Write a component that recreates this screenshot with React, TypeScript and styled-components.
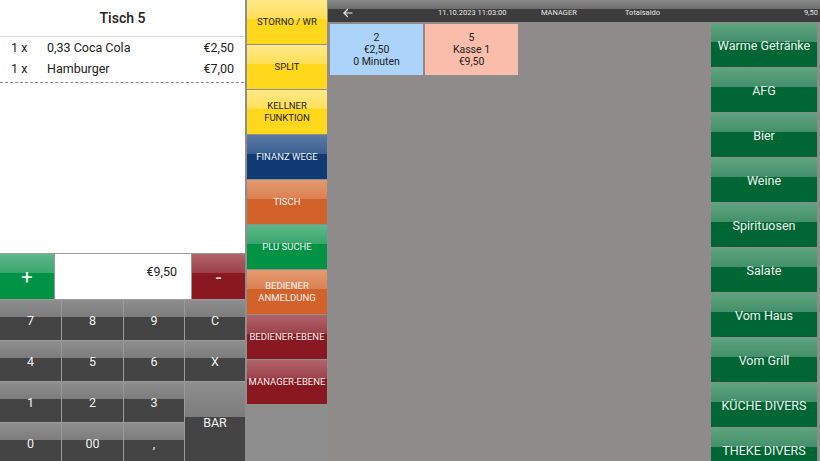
import React from 'react';
import styled, { createGlobalStyle } from 'styled-components';

const GlobalStyle = createGlobalStyle`
  html, body {
    margin: 0;
    padding: 0;
    width: 820px;
    height: 461px;
    overflow: hidden;
    font-family: Roboto, "Liberation Sans", sans-serif;
  }
`;

const Screen = styled.div`
  display: grid;
  grid-template-columns: 245px 83px 1fr;
  width: 820px;
  height: 461px;
  background: #8f8b8a;
  overflow: hidden;
`;

const LeftPanel = styled.div`
  display: flex;
  flex-direction: column;
  background: #9a9a9a;
`;

const Receipt = styled.div`
  height: 253px;
  background: #fff;
  display: flex;
  flex-direction: column;
`;

const ReceiptTitle = styled.div`
  height: 36px;
  display: flex;
  align-items: center;
  justify-content: center;
  font-size: 14px;
  font-weight: 500;
  color: #222;
  border-bottom: 1px solid #ddd;
`;

const ItemList = styled.div`
  padding: 0 0 3px;
  border-bottom: 1px dashed #888;
  margin-right: 1px;
`;

const ItemRow = styled.div`
  display: grid;
  grid-template-columns: 36px 1fr auto;
  padding: 0 10px 0 11px;
  height: 21px;
  align-items: center;
  font-size: 12.5px;
  color: #222;
`;

const TotalRow = styled.div`
  display: grid;
  grid-template-columns: 54px 136px 1fr;
  gap: 1px;
  height: 45px;
  margin-top: 1px;
`;

type GlossProps = { $top: string; $bottom: string; $light?: string; $dark?: boolean };

const Gloss = styled.div<GlossProps>`
  display: flex;
  align-items: center;
  justify-content: center;
  text-align: center;
  color: ${(p) => (p.$dark ? '#222' : '#f2f2f2')};
  background: linear-gradient(
    to bottom,
    ${(p) => p.$light ?? p.$top} 0%,
    ${(p) => p.$top} 43%,
    ${(p) => p.$bottom} 43%,
    ${(p) => p.$bottom} 100%
  );
`;

const SignButton = styled(Gloss)`
  font-size: 20px;
`;

const TotalBox = styled.div`
  background: #fff;
  display: flex;
  justify-content: flex-end;
  align-items: flex-start;
  padding: 10px 14px 0 0;
  font-size: 12.5px;
  color: #222;
`;

const Keypad = styled.div`
  display: grid;
  grid-template-columns: 61px 61px 60px 1fr;
  grid-template-rows: repeat(4, 40px);
  gap: 1px;
  margin-top: 1px;
  flex: 1;
`;

const Key = styled(Gloss)<{ $span?: number }>`
  font-size: 12.5px;
  grid-row: ${(p) => (p.$span ? `span ${p.$span}` : 'auto')};
`;

const MidColumn = styled.div`
  display: flex;
  flex-direction: column;
  gap: 1px;
  padding: 0 1px 0 2px;
  background: #8e8e8e;
`;

const FnButton = styled(Gloss)`
  height: 44px;
  font-size: 9.5px;
  line-height: 12px;
  text-transform: uppercase;
  flex-shrink: 0;
`;

const FnLabel = styled.span`
  white-space: pre-line;
`;

const RightArea = styled.div`
  display: flex;
  flex-direction: column;
`;

const TopBar = styled.div`
  height: 22px;
  display: flex;
  align-items: center;
  padding-top: 3px;
  box-sizing: border-box;
  font-size: 7.5px;
  color: #e8e8e8;
  background: linear-gradient(to bottom, #8a8a8a 0%, #6f6f6f 40%, #3d3d3d 40%, #3b3b3b 100%);
`;

const BarCell = styled.span<{ $w: number; $pad?: number }>`
  width: ${(p) => p.$w}px;
  padding-left: ${(p) => p.$pad ?? 0}px;
  box-sizing: border-box;
  flex-shrink: 0;
  display: flex;
  align-items: center;
`;

const BarEnd = styled.span`
  flex: 1;
  text-align: right;
  padding-right: 2px;
`;

const Body = styled.div`
  flex: 1;
  display: flex;
  min-height: 0;
`;

const TableArea = styled.div`
  flex: 1;
  display: flex;
  align-items: flex-start;
  gap: 2px;
  padding: 2px 0 0 2px;
`;

const TableTile = styled.div<{ $bg: string }>`
  width: 93px;
  height: 51px;
  background: ${(p) => p.$bg};
  display: flex;
  flex-direction: column;
  justify-content: center;
  align-items: center;
  font-size: 10.5px;
  line-height: 12px;
  color: #222;
`;

const Categories = styled.div`
  width: 106px;
  margin-right: 3px;
  padding-top: 1px;
  display: flex;
  flex-direction: column;
  gap: 1px;
`;

const CatButton = styled(Gloss)`
  height: 44px;
  flex-shrink: 0;
  font-size: 12.5px;
`;

const colors: Record<string, GlossProps> = {
  yellow: { $light: '#ffe98a', $top: '#ffdf55', $bottom: '#ffd81c', $dark: true },
  blue: { $light: '#5c7aa4', $top: '#3b5f92', $bottom: '#0f3a73' },
  orange: { $light: '#e39a70', $top: '#dc8052', $bottom: '#d2612a' },
  green: { $light: '#5cb888', $top: '#3aa56c', $bottom: '#009245' },
  red: { $light: '#b0646c', $top: '#9d3f48', $bottom: '#8a1820' },
  key: { $light: '#8e8e8e', $top: '#7c7c7c', $bottom: '#444444' },
  cat: { $light: '#5fa47e', $top: '#43906a', $bottom: '#006633' },
};

const functions = [
  { label: 'STORNO / WR', c: 'yellow' },
  { label: 'SPLIT', c: 'yellow' },
  { label: 'KELLNER\nFUNKTION', c: 'yellow' },
  { label: 'FINANZ WEGE', c: 'blue' },
  { label: 'TISCH', c: 'orange' },
  { label: 'PLU SUCHE', c: 'green' },
  { label: 'BEDIENER\nANMELDUNG', c: 'orange' },
  { label: 'BEDIENER-EBENE', c: 'red' },
  { label: 'MANAGER-EBENE', c: 'red' },
];

const categories = [
  'Warme Getränke',
  'AFG',
  'Bier',
  'Weine',
  'Spirituosen',
  'Salate',
  'Vom Haus',
  'Vom Grill',
  'KÜCHE DIVERS',
  'THEKE DIVERS',
];

const keys = ['7', '8', '9', 'C', '4', '5', '6', 'X', '1', '2', '3', 'BAR', '0', '00', ','];

const ArrowLeft = () => (
  <svg width="12" height="12" viewBox="0 0 24 24" fill="none" stroke="#f0f0f0" strokeWidth="2.4" strokeLinecap="round" strokeLinejoin="round">
    <path d="M20 12H4" />
    <path d="M11 5l-7 7 7 7" />
  </svg>
);

export default function App() {
  return (
    <Screen>
      <GlobalStyle />
      <LeftPanel>
        <Receipt>
          <ReceiptTitle>Tisch 5</ReceiptTitle>
          <ItemList>
            <ItemRow>
              <span>1 x</span>
              <span>0,33 Coca Cola</span>
              <span>€2,50</span>
            </ItemRow>
            <ItemRow>
              <span>1 x</span>
              <span>Hamburger</span>
              <span>€7,00</span>
            </ItemRow>
          </ItemList>
        </Receipt>
        <TotalRow>
          <SignButton {...colors.green}>+</SignButton>
          <TotalBox>€9,50</TotalBox>
          <SignButton {...colors.red}>-</SignButton>
        </TotalRow>
        <Keypad>
          {keys.map((k) => (
            <Key key={k} {...colors.key} $span={k === 'BAR' ? 2 : undefined}>
              {k}
            </Key>
          ))}
        </Keypad>
      </LeftPanel>

      <MidColumn>
        {functions.map((f) => (
          <FnButton key={f.label} {...colors[f.c]}>
            <FnLabel>{f.label}</FnLabel>
          </FnButton>
        ))}
      </MidColumn>

      <RightArea>
        <TopBar>
          <BarCell $w={110} $pad={14}>
            <ArrowLeft />
          </BarCell>
          <BarCell $w={103}>11.10.2023 11:03:00</BarCell>
          <BarCell $w={84}>MANAGER</BarCell>
          <BarCell $w={80}>Totalsaldo</BarCell>
          <BarEnd>9,50</BarEnd>
        </TopBar>
        <Body>
          <TableArea>
            <TableTile $bg="#acd3fa">
              <span>2</span>
              <span>€2,50</span>
              <span>0 Minuten</span>
            </TableTile>
            <TableTile $bg="#fbbdab">
              <span>5</span>
              <span>Kasse 1</span>
              <span>€9,50</span>
            </TableTile>
          </TableArea>
          <Categories>
            {categories.map((c) => (
              <CatButton key={c} {...colors.cat}>
                {c}
              </CatButton>
            ))}
          </Categories>
        </Body>
      </RightArea>
    </Screen>
  );
}
